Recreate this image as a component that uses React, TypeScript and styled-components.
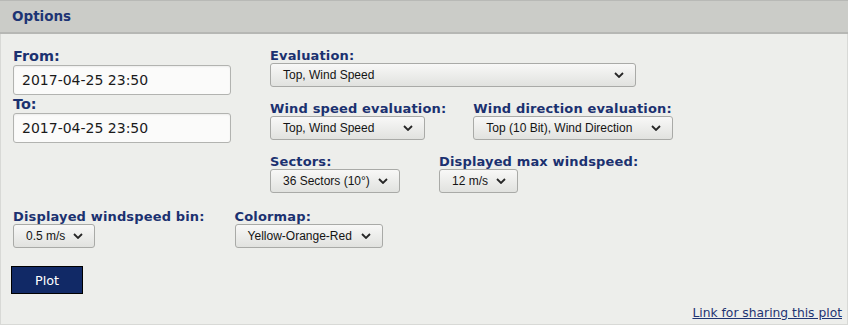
import styled, { createGlobalStyle } from "styled-components"

const GlobalStyle = createGlobalStyle`
  html, body {
    margin: 0;
    padding: 0;
    background: #edeeeb;
  }
  body {
    font-family: "DejaVu Sans", Verdana, sans-serif;
  }
`

const Panel = styled.section`
  width: 848px;
  height: 325px;
  box-sizing: border-box;
  border: 1px solid #d8d9d6;
  border-top: none;
  background: #edeeeb;
  display: flex;
  flex-direction: column;
`

const Header = styled.header`
  height: 31px;
  line-height: 31px;
  background: #cbccc8;
  border-top: 1px solid #b8b9b6;
  border-bottom: 2px solid #b6b7b4;
  margin: 0 -1px;
  padding-left: 12px;
  font-size: 13.5px;
  font-weight: bold;
  color: #1d3474;
`

const Body = styled.div`
  flex: 1;
  display: flex;
  flex-direction: column;
  padding: 14px 5px 0 12px;
`

const TopArea = styled.div`
  display: flex;
  gap: 39px;
`

const LeftCol = styled.div`
  width: 218px;
  display: flex;
  flex-direction: column;
`

const RightCol = styled.div`
  display: flex;
  flex-direction: column;
  gap: 14px;
`

const Row = styled.div<{ $gap?: number }>`
  display: flex;
  align-items: flex-start;
  gap: ${(p) => p.$gap ?? 30}px;
`

const Field = styled.div`
  display: flex;
  flex-direction: column;
`

const BigLabel = styled.label`
  font-size: 14.4px;
  font-weight: bold;
  color: #1b3170;
`

const Label = styled.label`
  font-size: 13px;
  font-weight: bold;
  letter-spacing: 0.15px;
  color: #1b3170;
  white-space: nowrap;
`

const DateInput = styled.input`
  box-sizing: border-box;
  width: 218px;
  height: 30px;
  margin: 1px 0 1px;
  padding: 0 8px;
  border: 1px solid #b2b3b0;
  border-radius: 3px;
  background: #fbfbfa;
  box-shadow: inset 0 1px 2px rgba(0, 0, 0, 0.06);
  font-family: "DejaVu Sans", sans-serif;
  font-size: 14px;
  color: #1a1a1a;
  outline: none;
`

const SelectBox = styled.div<{ $width: number }>`
  box-sizing: border-box;
  width: ${(p) => p.$width}px;
  height: 24px;
  display: flex;
  align-items: center;
  padding: 0 11px 0 12px;
  border: 1px solid #a9aaa7;
  border-radius: 3px;
  background: linear-gradient(#f8f8f7, #e1e2df);
  font-family: "Liberation Sans", Arial, sans-serif;
  font-size: 12px;
  color: #141414;
  white-space: nowrap;
  cursor: default;
`

const SelectText = styled.span`
  flex: 1;
`

const Chevron = styled.svg`
  flex: none;
  margin-left: 6px;
`

const BottomRow = styled(Row)`
  margin-top: 16px;
`

const PlotButton = styled.button`
  align-self: flex-start;
  margin: 18px 0 0 -2px;
  width: 72px;
  height: 28px;
  background: #112966;
  border: 1px solid #000;
  color: #fff;
  font-family: "DejaVu Sans", sans-serif;
  font-size: 12.8px;
  cursor: pointer;
`

const Footer = styled.div`
  margin-top: 8px;
  text-align: right;
`

const ShareLink = styled.a`
  font-size: 12.3px;
  color: #1f3473;
  text-decoration: underline;
`

function Select({ value, width }: { value: string; width: number }) {
  return (
    <SelectBox $width={width} role="combobox">
      <SelectText>{value}</SelectText>
      <Chevron width="10" height="6" viewBox="0 0 10 6">
        <path d="M1 1 L5 5 L9 1" fill="none" stroke="#262626" strokeWidth="1.8" />
      </Chevron>
    </SelectBox>
  )
}

export default function App() {
  return (
    <>
      <GlobalStyle />
      <Panel>
        <Header>Options</Header>
        <Body>
          <TopArea>
            <LeftCol>
              <BigLabel>From:</BigLabel>
              <DateInput defaultValue="2017-04-25 23:50" />
              <BigLabel>To:</BigLabel>
              <DateInput defaultValue="2017-04-25 23:50" />
            </LeftCol>
            <RightCol>
              <Field>
                <Label>Evaluation:</Label>
                <Select value="Top, Wind Speed" width={366} />
              </Field>
              <Row $gap={27}>
                <Field>
                  <Label>Wind speed evaluation:</Label>
                  <Select value="Top, Wind Speed" width={155} />
                </Field>
                <Field>
                  <Label>Wind direction evaluation:</Label>
                  <Select value="Top (10 Bit), Wind Direction" width={200} />
                </Field>
              </Row>
              <Row $gap={39}>
                <Field>
                  <Label>Sectors:</Label>
                  <Select value="36 Sectors (10°)" width={130} />
                </Field>
                <Field>
                  <Label>Displayed max windspeed:</Label>
                  <Select value="12 m/s" width={79} />
                </Field>
              </Row>
            </RightCol>
          </TopArea>
          <BottomRow>
            <Field>
              <Label>Displayed windspeed bin:</Label>
              <Select value="0.5 m/s" width={82} />
            </Field>
            <Field>
              <Label>Colormap:</Label>
              <Select value="Yellow-Orange-Red" width={148} />
            </Field>
          </BottomRow>
          <PlotButton>Plot</PlotButton>
          <Footer>
            <ShareLink href="#">Link for sharing this plot</ShareLink>
          </Footer>
        </Body>
      </Panel>
    </>
  )
}
